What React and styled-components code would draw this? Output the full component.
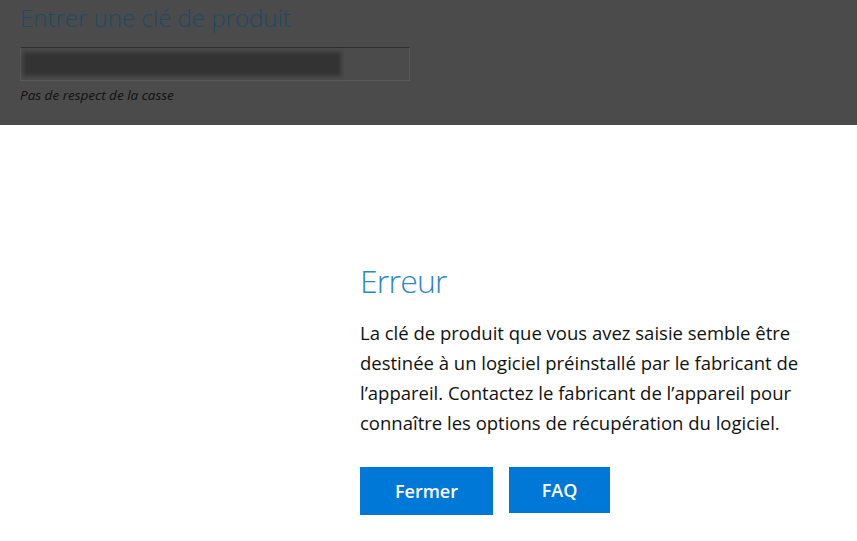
import styled, { createGlobalStyle } from "styled-components";

const GlobalStyle = createGlobalStyle`
	html, body {
		margin: 0;
		padding: 0;
		background: #ffffff;
	}
	#root {
		width: 857px;
		height: 541px;
	}
`;

const Page = styled.div`
	width: 857px;
	height: 541px;
	display: flex;
	flex-direction: column;
	overflow: hidden;
	font-family: "Open Sans", "Noto Sans", sans-serif;
`;

const Backdrop = styled.div`
	height: 125px;
	flex-shrink: 0;
	background: #4b4b4b;
	padding: 2px 0 0 20px;
	box-sizing: border-box;
`;

const PageTitle = styled.h1`
	margin: 0;
	font-size: 24px;
	font-weight: 300;
	line-height: 32px;
	color: #1d4a69;
`;

const KeyField = styled.div`
	margin-top: 13px;
	width: 390px;
	height: 34px;
	box-sizing: border-box;
	border: 1px solid #5a5a5a;
	border-top-color: #2f2f2f;
	padding: 4px 2px;
`;

const BlurredKey = styled.div`
	width: 318px;
	height: 24px;
	background: #333333;
	filter: blur(2px);
`;

const Hint = styled.p`
	margin: 5px 0 0;
	font-size: 13.5px;
	font-style: italic;
	color: #111111;
`;

const Dialog = styled.div`
	flex: 1;
	background: #ffffff;
	padding: 136px 0 0 360px;
	box-sizing: border-box;
`;

const DialogTitle = styled.h2`
	margin: 0;
	font-size: 32px;
	font-weight: 300;
	line-height: 40px;
	color: #2a88c2;
	letter-spacing: -0.8px;
`;

const Message = styled.p`
	margin: 17px 0 0;
	width: 470px;
	font-size: 18.5px;
	line-height: 30px;
	color: #111111;
`;

const Actions = styled.div`
	display: flex;
	gap: 16px;
	margin-top: 29px;
	align-items: flex-start;
`;

const Button = styled.button`
	width: ${(p) => p.width};
	height: ${(p) => p.height};
	border: none;
	background: #0078d7;
	color: #ffffff;
	font-family: inherit;
	font-size: 18px;
	font-weight: 600;
	padding: 0;
	cursor: pointer;
`;

export default function App() {
	return (
		<>
			<GlobalStyle />
			<Page>
				<Backdrop>
					<PageTitle>Entrer une clé de produit</PageTitle>
					<KeyField>
						<BlurredKey />
					</KeyField>
					<Hint>Pas de respect de la casse</Hint>
				</Backdrop>
				<Dialog>
					<DialogTitle>Erreur</DialogTitle>
					<Message>
						La clé de produit que vous avez saisie semble être
						destinée à un logiciel préinstallé par le fabricant de
						l’appareil. Contactez le fabricant de l’appareil pour
						connaître les options de récupération du logiciel.
					</Message>
					<Actions>
						<Button width="133px" height="48px">Fermer</Button>
						<Button width="101px" height="46px">FAQ</Button>
					</Actions>
				</Dialog>
			</Page>
		</>
	);
}
